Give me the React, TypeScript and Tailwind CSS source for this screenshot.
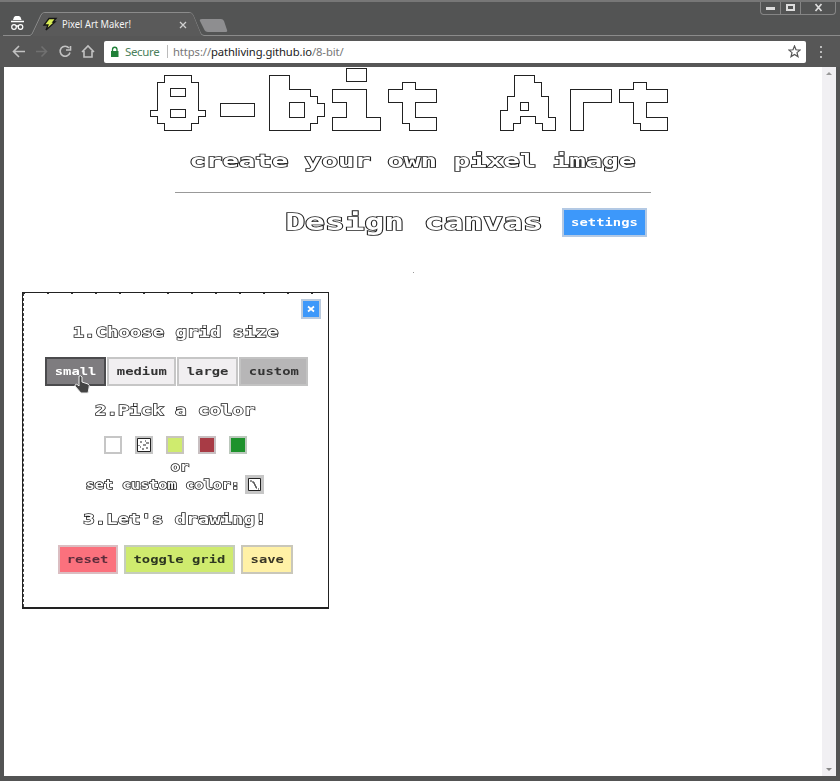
import type { ReactNode } from "react";

const pixel = "font-['DejaVu_Sans_Mono','Liberation_Mono',monospace] font-bold whitespace-pre";
const outline = "text-white [paint-order:stroke_fill]";

function Btn({ children, className }: { children: ReactNode; className: string }) {
  return (
    <button className={`flex h-[29px] shrink-0 items-center justify-center border-2 ${className}`}>
      <span className={`${pixel} block scale-x-[1.26] text-[11px] leading-none`}>{children}</span>
    </button>
  );
}

function Step({ children, className }: { children: ReactNode; className: string }) {
  return (
    <h3 className={`flex h-[18px] items-center justify-center ${className}`}>
      <span className={`${pixel} ${outline} block scale-x-[1.31] text-[14.5px] leading-none [-webkit-text-stroke:1.3px_#222]`}>
        {children}
      </span>
    </h3>
  );
}

/* Samples the title on a grid of 7px by 7px cells and keeps only the border of the blocks. */
function BlockFilter() {
  return (
    <svg className="absolute size-0" aria-hidden="true">
      <filter id="blocks" filterUnits="userSpaceOnUse" primitiveUnits="userSpaceOnUse" x="0" y="0" width="522" height="71" colorInterpolationFilters="sRGB">
        <feFlood x="3" y="3" width="1" height="1" floodColor="#222" result="dot" />
        <feComposite in="dot" in2="dot" operator="over" x="0" y="0" width="7" height="7" result="cell" />
        <feTile in="cell" result="grid" />
        <feComposite in="grid" in2="SourceAlpha" operator="in" result="sampled" />
        <feComponentTransfer in="sampled" result="hard">
          <feFuncA type="discrete" tableValues="0 1" />
        </feComponentTransfer>
        <feMorphology in="hard" operator="dilate" radius="3" result="body" />
        <feMorphology in="body" operator="erode" radius="1" result="inner" />
        <feComposite in="body" in2="inner" operator="out" />
      </filter>
    </svg>
  );
}

function TitleBar() {
  return (
    <div className="relative flex h-[36px] shrink-0">
      <svg className="h-[36px] w-[240px]" viewBox="0 0 240 36" fill="none">
        <path d="M3 35.500H30Q32 35 33 32L41 15Q42 12.500 45 12.500H189Q192 12.500 193 15L200 32Q201 35.500 204 35.500H240" stroke="#8b8b8b" />
        <path d="M32 36Q33 34 34 32L42 15Q43 13 45 13H189Q192 13 193 15L200 32Q201 36 203 36Z" fill="#5a5a5a" />
        <path d="M202 19H221Q223 19 224 21L227 30Q228 32 225 32H208Q205 32 204 29L200 21Q199 19 202 19Z" fill="#8e8e90" />
        <path d="M14 17L15.500 16H19L20.500 17L21.500 20H13Z" fill="#fff" />
        <path d="M11 21.500H24M16 26H19" stroke="#fff" strokeWidth="1.500" />
        <circle cx="14" cy="27" r="2.300" stroke="#fff" strokeWidth="1.200" />
        <circle cx="20.500" cy="27" r="2.300" stroke="#fff" strokeWidth="1.200" />
        <path d="M49 18.500H56L53 22H55L46 30L48 25H44Z" fill="#d9ed55" stroke="#151515" strokeWidth="1.300" />
        <path d="M180 22L186 28M186 22L180 28" stroke="#d0d0d0" strokeWidth="1.300" />
        <text x="62" y="28" fill="#f4f4f4" fontSize="10.500" textLength="69" lengthAdjust="spacingAndGlyphs" fontFamily="Noto Sans, sans-serif">Pixel Art Maker!</text>
      </svg>
      <div className="h-px flex-1 self-end bg-[#8b8b8b]" />
      <div className="absolute top-0 right-[4px] flex h-[15px] w-[76px] rounded-b border border-t-0 border-[#858585]">
        <div className="flex w-[20px] items-center justify-center border-r border-[#858585]"><span className="mt-[3px] h-[3px] w-[9px] bg-[#ddd]" /></div>
        <div className="flex w-[20px] items-center justify-center border-r border-[#858585]"><span className="h-[7px] w-[9px] border-2 border-[#ddd]" /></div>
        <div className="flex flex-1 items-center justify-center">
          <svg width="9" height="9" viewBox="0 0 9 9" stroke="#ddd" strokeWidth="1.700"><path d="M1.500 1L7.500 8M7.500 1L1.500 8" /></svg>
        </div>
      </div>
    </div>
  );
}

function Toolbar() {
  return (
    <div className="flex h-[31px] shrink-0 items-center bg-[#575757]">
      <svg className="h-[31px] w-[104px] shrink-0" viewBox="0 36 104 31" fill="none" stroke="#c2c2c2" strokeWidth="1.600">
        <path d="M25 51.500H14M19 46L13.500 51.500L19 57" />
        <path d="M36 51.500H46M41.500 46.500L46.500 51.500L41.500 56.500" stroke="#707070" />
        <path d="M69 48A5 5 0 1 0 70 52.500M70.500 46V50H66" />
        <path d="M82 52L88 46L94 52M84 51V57H92V51" />
      </svg>
      <div className="flex h-[22px] w-[702px] shrink-0 items-center rounded-[2px] bg-white font-['Noto_Sans',sans-serif] text-[11.5px] leading-none">
        <svg className="h-[22px] w-[21px] shrink-0" viewBox="104 40 21 22">
          <rect x="111" y="50" width="7.500" height="6" fill="#208038" />
          <path d="M112.500 50V48.500A2.200 2.200 0 0 1 117 48.500V50" fill="none" stroke="#208038" strokeWidth="1.300" />
        </svg>
        <span className="w-[42px] tracking-[-0.35px] text-[#4b805c]">Secure</span>
        <span className="h-[13px] w-px bg-[#bbb]" />
        <div className="ml-[5px] flex text-[11.25px] tracking-[-0.1px] text-[#777]">
          <span>https://</span><span className="text-[#222]">pathliving.github.io</span><span>/8-bit/</span>
        </div>
        <svg className="mr-[5px] ml-auto" width="13" height="13" viewBox="0 0 13 13" fill="none" stroke="#555" strokeWidth="1.200">
          <path d="M6.500 1L8 4.800L12 5.100L9 7.600L10 11.600L6.500 9.400L3 11.600L4 7.600L1 5.100L5 4.800Z" />
        </svg>
      </div>
      <div className="ml-[14px] flex flex-col gap-[3px]">
        <span className="size-[2px] bg-[#bbb]" /><span className="size-[2px] bg-[#bbb]" /><span className="size-[2px] bg-[#bbb]" />
      </div>
    </div>
  );
}

function Panel() {
  return (
    <section className="relative ml-[18px] h-[317px] w-[307px] border border-b-2 border-[#222]">
      <div className="absolute inset-y-0 left-0 border-l border-dashed border-[#444]" />
      <div className="absolute inset-x-0 top-0 h-px bg-[repeating-linear-gradient(90deg,#333_0_2px,transparent_2px_24px)]" />
      <div className="flex justify-end pt-[6px] pr-[7px]">
        <button className="flex size-[20px] items-center justify-center border-2 border-[#bacbdf] bg-[#3d98fa]">
          <svg width="8" height="8" viewBox="0 0 8 8" stroke="#fff" strokeWidth="1.700"><path d="M1 1.500L7 6.500M7 1.500L1 6.500" /></svg>
        </button>
      </div>
      <Step className="mt-[4px]">1.Choose grid size</Step>
      <div className="relative mt-[16px] ml-[22px] flex gap-px">
        <Btn className="w-[61px] border-[#4b4b4d] bg-[#7e7c7f] text-white">small</Btn>
        <Btn className="w-[69px] border-[#c6c6c6] bg-[#f1eff1] text-[#333]">medium</Btn>
        <Btn className="w-[61px] border-[#c6c6c6] bg-[#f1eff1] text-[#333]">large</Btn>
        <Btn className="w-[69px] border-[#c2c2c2] bg-[#b7b6b7] text-[#333]">custom</Btn>
        <svg className="absolute top-[18px] left-[29px]" width="18" height="19" viewBox="0 0 18 19">
          <path d="M5 1Q7 0 8 2V7L14 9Q16 10 15 13L14 18H7L1 11Q1 8 4 10L5 11Z" fill="#444" stroke="#eee" />
        </svg>
      </div>
      <Step className="mt-[15px]">2.Pick a color</Step>
      <div className="mt-[17px] ml-[81px] flex gap-[13.2px]">
        <span className="size-[18px] border-2 border-[#c6c6c6] bg-white" />
        <span className="flex size-[18px] items-center justify-center bg-[#c6c6c6]">
          <svg width="14" height="14" viewBox="0 0 14 14"><path d="M.5.5H13.500V13.500H.5Z" fill="#fff" stroke="#222" /><path d="M3 4H5M8 3H9M11 5H12M6 7H7M3 9H4M5 11H7M10 9V11M8 6V8M2 7V8M10 4V6" stroke="#222" /></svg>
        </span>
        <span className="size-[18px] border-2 border-[#c8c5bd] bg-[#cfeb6e]" />
        <span className="size-[18px] border-2 border-[#c8bfc1] bg-[#a83b45]" />
        <span className="size-[18px] border-2 border-[#bbc8bc] bg-[#1d922c]" />
      </div>
      <div className="mt-[5px] ml-[8px] flex h-[17px] items-center justify-center">
        <span className={`${pixel} ${outline} block scale-x-[1.31] text-[11.5px] leading-none [-webkit-text-stroke:1.3px_#222]`}>or</span>
      </div>
      <div className="-mt-[2px] ml-[63px] flex h-[20px] items-center">
        <div className="flex w-[153px] justify-center pt-[4px]">
          <span className={`${pixel} ${outline} block scale-x-[1.31] text-[11.5px] leading-none [-webkit-text-stroke:1.3px_#222]`}>set custom color:</span>
        </div>
        <span className="ml-[6px] flex size-[19px] items-center justify-center bg-[#c6c6c6]">
          <svg width="13" height="13" viewBox="0 0 13 13"><path d="M.5.5H12.500V12.500H.5Z" fill="#fff" stroke="#222" /><path d="M3 2V4M4 4H6V6H7V8H8V10H9M10 11H11" fill="none" stroke="#222" /></svg>
        </span>
      </div>
      <Step className="mt-[16px] -ml-[1px]">3.Let's drawing!</Step>
      <div className="mt-[17px] ml-[35px] flex gap-[6px]">
        <Btn className="w-[60px] border-[#dbbec2] bg-[#fb717d] text-[#5c2c3b]">reset</Btn>
        <Btn className="w-[111px] border-[#c5cdbb] bg-[#cfeb6e] text-[#2d3720]">toggle grid</Btn>
        <Btn className="w-[52px] border-[#c9c7ba] bg-[#fff1a6] text-[#393526]">save</Btn>
      </div>
    </section>
  );
}

export default function App() {
  return (
    <div className="flex h-[781px] w-[840px] flex-col overflow-hidden border-t-2 border-[#777] bg-[#535454]">
      <BlockFilter />
      <div className="-mt-[2px] flex flex-col"><TitleBar /><Toolbar /></div>
      <div className="mx-[4px] flex h-[709px] shrink-0 bg-white">
        <main className="w-[818px]">
          <h1 className="flex h-[71px] pt-px pl-[146px]">
            <span className="flex h-[71px] w-[522px] items-center justify-center pt-[3px] [filter:url(#blocks)]">
              <span className={`${pixel} block scale-x-[1.42] text-[68px] leading-none text-black [-webkit-text-stroke:3px_#000]`}>8-bit Art</span>
            </span>
          </h1>
          <p className="mt-[12px] ml-[185px] flex h-[22px] w-[446px] items-center justify-center">
            <span className={`${pixel} ${outline} block scale-x-[1.525] text-[18px] leading-none [-webkit-text-stroke:1.5px_#222]`}>create your own pixel image</span>
          </p>
          <hr className="mt-[20px] ml-[171px] w-[476px] border-[#999]" />
          <div className="mt-[15px] ml-[282px] flex h-[29px] items-center">
            <h2 className="flex w-[257px] justify-center">
              <span className={`${pixel} ${outline} block scale-x-[1.43] text-[23px] leading-none [-webkit-text-stroke:1.6px_#222]`}>Design canvas</span>
            </h2>
            <Btn className="ml-[19px] w-[85px] border-[#b3c9e4] bg-[#3d98fa] text-white">settings</Btn>
          </div>
          <div className="mt-[35px] ml-[409px] h-px w-px bg-[#999]" />
          <div className="mt-[19px]"><Panel /></div>
        </main>
        <div className="flex w-[14px] flex-col items-center justify-between bg-[#f1f0f3] py-[5px]">
          <span className="border-x-[3px] border-b-[3px] border-x-transparent border-b-[#999]" />
          <span className="border-x-[3px] border-t-[3px] border-x-transparent border-t-[#888]" />
        </div>
      </div>
    </div>
  );
}
